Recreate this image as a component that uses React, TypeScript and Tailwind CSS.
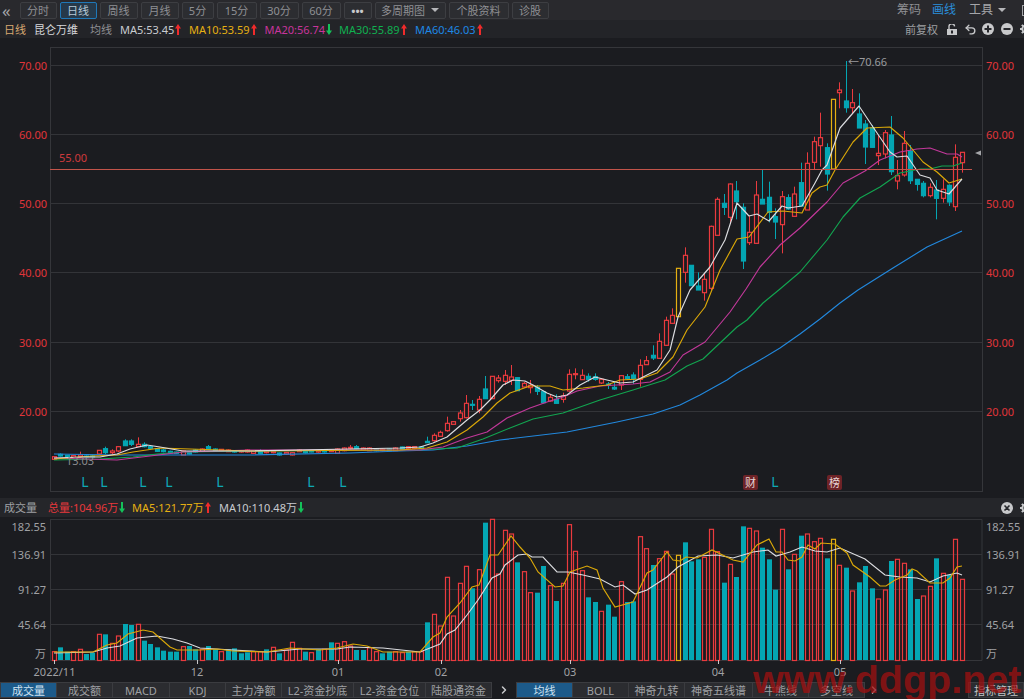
import { ChevronRight, Undo2 } from 'lucide-react';

type Kind = 'r' | 't' | 'y';
type Candle = [number, number, number, number, Kind];
type Point = [number, number];

const RED = '#ea3a3e';
const TEAL = '#04a6b3';
const YELLOW = '#e6b012';
const STEP = 6.44;
const barX = (i: number) => Math.floor(54.3 + STEP * i);

// candle rows were read off zoomed crops, so each group keeps its own y origin
const shift = (y0: number, rows: Candle[]): Candle[] =>
  rows.map(([h, t, b, l, k]) => [y0 + h / 3, y0 + t / 3, y0 + b / 3, y0 + l / 3, k]);

const candles: Candle[] = [
  ...shift(430, [
    [80, 80, 88, 88, 'r'], [70, 73, 78, 80, 't'], [75, 76, 80, 84, 't'], [75, 77, 82, 84, 'r'],
    [65, 75, 80, 82, 'r'], [76, 78, 80, 82, 't'], [76, 78, 81, 84, 't'], [60, 61, 72, 75, 'r'],
    [50, 56, 68, 72, 't'], [58, 63, 68, 72, 'r'], [48, 50, 63, 66, 'r'], [28, 33, 47, 48, 't'],
    [28, 33, 43, 48, 't'], [22, 43, 50, 50, 'r'], [37, 43, 50, 52, 't'], [47, 50, 55, 58, 't'],
    [55, 56, 64, 66, 't'], [57, 60, 65, 67, 't'], [62, 64, 69, 70, 't'], [65, 66, 70, 72, 't'],
    [62, 63, 75, 75, 'r'], [65, 66, 72, 73, 't'], [57, 60, 66, 68, 't'], [55, 57, 64, 66, 'r'],
    [45, 50, 58, 60, 't'], [55, 57, 63, 64, 't'], [57, 58, 63, 65, 'r'], [58, 60, 65, 66, 'r'],
    [60, 62, 66, 68, 't'], [60, 62, 66, 68, 'r'], [58, 60, 66, 68, 'r'], [60, 62, 70, 71, 'r'],
    [58, 63, 70, 71, 't'], [60, 63, 68, 70, 'r'], [62, 64, 68, 70, 'r'], [68, 69, 75, 77, 't'],
    [66, 67, 72, 74, 'r'], [66, 68, 75, 76, 'r'], [57, 60, 65, 66, 'r'], [60, 62, 68, 70, 't'],
    [60, 62, 66, 67, 't'], [60, 62, 66, 68, 'r'], [58, 60, 66, 68, 't'], [57, 60, 65, 66, 'r'],
    [55, 57, 70, 72, 'r'], [52, 54, 62, 64, 'r'], [45, 52, 54, 58, 'r'], [45, 50, 56, 58, 't'],
    [52, 54, 60, 62, 'r'], [52, 54, 62, 62, 'r'], [54, 56, 62, 64, 't'], [56, 58, 62, 64, 'r'],
    [55, 57, 62, 64, 't'], [52, 54, 62, 62, 'r'], [50, 51, 60, 62, 't'], [49, 50, 55, 58, 'r'],
    [49, 50, 55, 58, 'r'], [48, 50, 55, 58, 't'],
  ]),
  ...shift(260, [
    [530, 544, 548, 548, 't'], [520, 526, 542, 545, 'r'], [512, 517, 529, 531, 'r'], [470, 490, 512, 515, 'r'],
    [483, 485, 493, 493, 'r'], [450, 459, 476, 485, 'r'], [405, 430, 473, 475, 'r'], [420, 433, 435, 450, 't'],
    [408, 418, 450, 460, 'r'], [348, 387, 416, 416, 't'], [348, 349, 416, 416, 'r'], [345, 354, 362, 368, 'r'],
    [330, 346, 364, 375, 'r'], [315, 351, 361, 375, 'r'], [352, 353, 392, 392, 't'], [365, 370, 381, 383, 'r'],
    [360, 376, 383, 400, 'r'], [375, 382, 394, 405, 't'], [392, 395, 428, 430, 't'], [405, 412, 423, 425, 'r'],
    [403, 418, 430, 430, 't'], [398, 408, 418, 428, 'r'], [328, 343, 393, 395, 'r'], [325, 341, 343, 358, 'r'],
    [328, 346, 359, 360, 'r'], [340, 349, 358, 365, 't'], [340, 350, 358, 362, 't'], [355, 358, 369, 372, 'r'],
    [366, 372, 373, 387, 't'], [365, 382, 387, 390, 't'], [345, 347, 375, 390, 'r'], [342, 350, 356, 360, 't'],
    [337, 345, 356, 372, 't'], [298, 316, 358, 380, 'r'], [288, 302, 314, 314, 'r'], [256, 286, 294, 300, 't'],
    [220, 244, 295, 296, 'r'], [170, 181, 256, 258, 'r'], [145, 166, 190, 190, 'r'],
  ]),
  ...shift(180, [
    [265, 265, 410, 410, 'y'], [202, 226, 277, 308, 'r'], [256, 256, 317, 317, 't'], [277, 318, 330, 330, 't'],
    [280, 298, 338, 362, 'r'], [137, 139, 325, 330, 'r'], [52, 58, 166, 166, 'r'], [42, 70, 82, 105, 't'],
    [10, 12, 112, 132, 'r'], [3, 33, 65, 118, 't'], [70, 82, 243, 267, 't'], [107, 157, 188, 195, 'r'],
    [3, 45, 190, 190, 'r'],
  ]),
  ...shift(50, [
    [360, 448, 462, 462, 't'], [395, 442, 487, 517, 't'], [475, 500, 516, 567, 't'], [423, 440, 524, 610, 'r'],
    [433, 443, 477, 480, 't'], [410, 432, 499, 499, 'r'], [338, 398, 468, 468, 't'], [307, 340, 480, 480, 'r'],
    [260, 275, 337, 357, 'r'], [188, 263, 287, 350, 'r'], [280, 293, 372, 422, 't'], [148, 148, 357, 357, 'y'],
    [97, 120, 128, 175, 'r'], [33, 153, 173, 188, 't'], [117, 158, 173, 190, 'r'], [130, 192, 234, 234, 't'],
    [210, 222, 291, 342, 't'], [225, 233, 292, 292, 't'], [255, 310, 317, 345, 'r'], [240, 248, 312, 325, 'r'],
    [198, 255, 365, 375, 't'], [330, 377, 393, 418, 'r'], [243, 280, 375, 380, 'r'], [285, 303, 392, 402, 't'],
    [388, 388, 403, 422, 't'], [393, 400, 437, 442, 't'], [400, 412, 437, 442, 'r'], [390, 420, 445, 508, 't'],
    [388, 418, 445, 458, 'r'], [403, 406, 456, 468, 't'], [283, 322, 470, 483, 'r'], [307, 307, 338, 368, 'r'],
  ]),
];

const volTops = (y0: number, tops: number[], kinds: string) =>
  tops.map((t, i) => ({ top: y0 + t / 3, kind: kinds[i] as Kind }));

const volumes = [
  ...volTops(
    600,
    [155, 142, 155, 155, 148, 162, 158, 103, 103, 130, 108, 72, 75, 73, 122, 132, 142, 152, 155, 155, 140, 138, 148, 148, 138, 148, 155, 148, 145, 160, 157, 155, 155, 148, 142, 160, 150, 127, 145, 155, 158, 148, 148, 127, 130, 125, 138, 150, 150, 143, 155, 160, 155, 155, 158, 155, 155, 155, 67, 43, 78],
    'rttrrttrtrrttrttttttrttrttrttttrrtrtrrrtrtrtrrrttrrttrrtrrtrr'.slice(0, 61),
  ),
  ...volTops(
    500,
    [232, 348, 250, 199, 265, 209, 68, 58, 222, 91, 102, 187, 215, 278, 278, 198, 257, 303, 250, 74, 154, 212, 292, 306, 334, 314, 350, 245, 306, 304, 110, 146, 195, 176, 154, 222, 166, 127, 184, 178, 172, 88, 155, 248, 193, 231, 79, 85, 93, 143, 178, 269],
    'rrrrtrtrrrrtrrttrtrrrrttrttrttrrtrrrytttrrrtrttrrttt',
  ),
  ...volTops(
    500,
    [88, 208, 163, 107, 102, 125, 115, 175, 118, 196, 203, 273, 247, 198, 265, 297, 270, 183, 178, 190, 208, 297, 288, 259, 175, 220, 225, 118, 238],
    'rtrtrrrtyrtrtttrrtrrttrrtrtrr',
  ),
];

const lines: { color: string; pts: Point[] }[] = [
  {
    color: '#2288dd',
    pts: [[54, 454], [120, 455], [250, 455], [350, 453], [400, 451], [433, 450], [467, 446], [500, 440], [567, 432], [617, 422], [653, 414], [680, 405], [700, 395], [727, 380], [737, 373], [760, 360], [780, 348], [800, 334], [820, 319], [840, 303], [858, 290], [893, 268], [927, 247], [962, 231]],
  },
  {
    color: '#12a550',
    pts: [[54, 460], [100, 459], [133, 457], [157, 454], [183, 452], [250, 451], [417, 450], [457, 448], [483, 439], [510, 428], [533, 419], [563, 413], [600, 400], [633, 390], [665, 380], [687, 366], [703, 359], [720, 343], [737, 327], [747, 320], [763, 303], [780, 289], [800, 272], [827, 240], [843, 217], [860, 198], [880, 187], [900, 173], [920, 169], [930, 169], [942, 166], [953, 166], [962, 163]],
  },
  {
    color: '#c2389a',
    pts: [[54, 458], [117, 460], [150, 456], [183, 452], [250, 450], [420, 450], [443, 447], [467, 438], [487, 432], [507, 418], [530, 408], [547, 402], [563, 397], [577, 391], [600, 386], [633, 384], [650, 382], [670, 372], [683, 355], [705, 342], [730, 312], [746, 289], [760, 267], [780, 245], [800, 228], [827, 202], [843, 183], [865, 171], [880, 160], [900, 152], [917, 149], [930, 148], [947, 154], [957, 154], [962, 157]],
  },
  {
    color: '#dba808',
    pts: [[54, 459], [93, 456], [117, 455], [133, 452], [160, 448], [190, 449], [250, 451], [400, 450], [427, 448], [447, 442], [467, 430], [483, 417], [497, 403], [510, 393], [530, 386], [550, 386], [563, 390], [583, 388], [607, 385], [620, 380], [640, 379], [657, 373], [673, 357], [687, 330], [705, 307], [720, 270], [737, 239], [749, 237], [768, 212], [783, 211], [802, 213], [812, 193], [820, 187], [827, 185], [835, 170], [853, 142], [867, 128], [890, 127], [903, 138], [923, 162], [937, 172], [949, 183], [962, 179]],
  },
  {
    color: '#dcdde0',
    pts: [[54, 458], [83, 457], [100, 457], [117, 454], [130, 449], [147, 445], [160, 447], [183, 451], [250, 451], [350, 449], [400, 448], [420, 447], [433, 443], [447, 437], [467, 420], [480, 410], [490, 400], [503, 385], [513, 380], [525, 381], [533, 385], [547, 393], [557, 397], [567, 395], [580, 385], [595, 377], [607, 380], [620, 383], [633, 382], [643, 377], [657, 370], [670, 350], [678, 317], [690, 290], [710, 267], [725, 240], [737, 203], [749, 216], [757, 214], [769, 221], [782, 206], [788, 208], [802, 206], [815, 183], [822, 170], [827, 165], [840, 128], [859, 106], [873, 127], [890, 152], [897, 157], [907, 156], [920, 175], [930, 178], [937, 190], [949, 194], [962, 179]],
  },
];

const volMa5: Point[] = [[54, 652], [93, 652], [107, 645], [117, 643], [128, 634], [143, 630], [153, 632], [170, 647], [177, 650], [200, 650], [217, 649], [233, 651], [267, 652], [290, 648], [320, 650], [337, 648], [353, 644], [367, 646], [383, 652], [420, 652], [433, 637], [440, 633], [447, 617], [460, 603], [472, 587], [479, 585], [490, 555], [498, 555], [511, 536], [520, 547], [530, 558], [538, 572], [555, 587], [563, 586], [570, 572], [587, 566], [597, 570], [603, 588], [615, 607], [633, 602], [647, 573], [653, 570], [667, 552], [673, 560], [680, 561], [686, 557], [697, 558], [712, 550], [733, 560], [743, 562], [757, 545], [769, 539], [776, 552], [782, 552], [788, 560], [795, 561], [802, 557], [808, 545], [815, 549], [821, 543], [835, 544], [847, 553], [853, 565], [870, 577], [880, 586], [886, 586], [895, 580], [907, 575], [912, 569], [917, 571], [930, 583], [943, 583], [950, 578], [957, 567], [962, 566]];

const volMa10: Point[] = [[54, 653], [93, 652], [107, 648], [120, 646], [137, 638], [157, 636], [173, 639], [187, 643], [200, 648], [233, 650], [267, 652], [300, 649], [337, 649], [350, 647], [383, 648], [420, 652], [440, 644], [447, 634], [455, 630], [467, 615], [478, 600], [492, 578], [500, 574], [505, 565], [518, 555], [527, 554], [532, 557], [543, 557], [557, 572], [568, 572], [583, 575], [600, 579], [615, 587], [623, 585], [635, 594], [647, 590], [667, 577], [678, 567], [698, 556], [717, 555], [733, 558], [753, 552], [768, 550], [776, 556], [790, 552], [802, 547], [815, 551], [827, 552], [840, 548], [865, 559], [885, 575], [900, 577], [917, 578], [930, 582], [943, 576], [957, 573], [962, 575]];

const toPath = (pts: Point[]) => pts.map(([x, y]) => `${x},${y}`).join(' ');

const priceGrid = [
  { y: 65.5, label: '70.00' },
  { y: 134.5, label: '60.00' },
  { y: 203.5, label: '50.00' },
  { y: 272.5, label: '40.00' },
  { y: 342.5, label: '30.00' },
  { y: 411.5, label: '20.00' },
];
const volGrid = [
  { y: 519.5, label: '182.55' },
  { y: 554.5, label: '136.91' },
  { y: 589.5, label: '91.27' },
  { y: 624.5, label: '45.64' },
];
const signals = [85, 104, 143, 169, 220, 311, 343, 775];
const months = [
  { x: 197, label: '12' },
  { x: 338, label: '01' },
  { x: 441, label: '02' },
  { x: 570, label: '03' },
  { x: 718, label: '04' },
  { x: 840, label: '05' },
];

const periods = [
  { label: '分时', w: 'w-[37px]' },
  { label: '日线', w: 'w-[37px]', on: true },
  { label: '周线', w: 'w-[38px]' },
  { label: '月线', w: 'w-[38px]' },
  { label: '5分', w: 'w-[32px]' },
  { label: '15分', w: 'w-[40px]' },
  { label: '30分', w: 'w-[39px]' },
  { label: '60分', w: 'w-[39px]' },
];

const leftTabs = [
  { label: '成交量', w: 'w-[56px]', on: true },
  { label: '成交额', w: 'w-[56px]' },
  { label: 'MACD', w: 'w-[57px]' },
  { label: 'KDJ', w: 'w-[56px]' },
  { label: '主力净额', w: 'w-[56px]' },
  { label: 'L2-资金抄底', w: 'w-[72px]' },
  { label: 'L2-资金仓位', w: 'w-[72px]' },
  { label: '陆股通资金', w: 'w-[66px]' },
];
const rightTabs = [
  { label: '均线', w: 'w-[56px]', on: true },
  { label: 'BOLL', w: 'w-[56px]' },
  { label: '神奇九转', w: 'w-[56px]' },
  { label: '神奇五线谱', w: 'w-[68px]' },
  { label: '牛熊线', w: 'w-[56px]' },
  { label: '多空线', w: 'w-[56px]' },
];

function Arrow({ up }: { up?: boolean }) {
  const color = up ? '#f02b2b' : '#14c25a';
  return (
    <svg width="6" height="11" viewBox="0 0 6 11" className="shrink-0">
      {up ? (
        <path d="M3 0 L6 4.5 H4 V11 H2 V4.5 H0 Z" fill={color} />
      ) : (
        <path d="M3 11 L6 6.5 H4 V0 H2 V6.5 H0 Z" fill={color} />
      )}
    </svg>
  );
}

function RoundIcon({ kind }: { kind: 'plus' | 'minus' | 'close' }) {
  return (
    <svg width="12" height="12" viewBox="0 0 12 12" className="shrink-0">
      <circle cx="6" cy="6" r="6" fill="#c8c9cb" />
      {kind !== 'close' && <rect x="2.5" y="5" width="7" height="2" fill="#26272b" />}
      {kind === 'plus' && <rect x="5" y="2.5" width="2" height="7" fill="#26272b" />}
      {kind === 'close' && <path d="M3.5 3.5 L8.5 8.5 M8.5 3.5 L3.5 8.5" stroke="#26272b" strokeWidth="1.6" />}
    </svg>
  );
}

function Gear() {
  return (
    <svg width="12" height="12" viewBox="0 0 12 12" className="shrink-0">
      <circle cx="6" cy="6" r="3.6" fill="none" stroke="#c8c9cb" strokeWidth="2" />
      <path d="M6 0 V2.5 M6 9.5 V12 M0 6 H2.5 M9.5 6 H12 M1.8 1.8 L3.4 3.4 M8.6 8.6 L10.2 10.2 M10.2 1.8 L8.6 3.4 M3.4 8.6 L1.8 10.2" stroke="#c8c9cb" strokeWidth="1.8" />
    </svg>
  );
}

function Lock() {
  return (
    <svg width="10" height="11" viewBox="0 0 10 11" className="shrink-0">
      <path d="M2 5 V3 A2.8 2.8 0 0 1 7.6 2.4" fill="none" stroke="#c8c9cb" strokeWidth="1.4" />
      <rect x="0" y="5" width="10" height="6" fill="#c8c9cb" />
      <rect x="4" y="6.5" width="2" height="3" fill="#26272b" />
    </svg>
  );
}

function Tabs({ items }: { items: { label: string; w: string; on?: boolean }[] }) {
  return (
    <div className="flex h-[16px] border-y border-l border-[#3b3c40]">
      {items.map((t) => (
        <div
          key={t.label}
          className={`${t.w} flex items-center justify-center border-r border-[#3b3c40] leading-none ${
            t.on ? 'bg-[#1c5a8a] text-[#cfe2f1]' : 'bg-[#2b2c30] text-[#9fa0a3]'
          }`}
        >
          {t.label}
        </div>
      ))}
    </div>
  );
}

export default function App() {
  return (
    <div className="relative flex h-[699px] w-[1024px] flex-col overflow-hidden bg-[#1b1c20] font-['Noto_Sans','Noto_Sans_CJK_SC',sans-serif] text-[11px] text-[#9fa0a3]">
      <div className="flex h-[20px] items-center bg-[#29292d]">
        <span className="ml-[2px] w-[17.5px] text-[17px] leading-none text-[#a5a6a9]">«</span>
        <div className="flex gap-[3px]">
          {periods.map((p) => (
            <div
              key={p.label}
              className={`${p.w} flex h-[17px] items-center justify-center rounded-[2px] border leading-none ${
                p.on ? 'border-[#1f78b8] bg-[#26394a] text-[#b7cad8]' : 'border-[#3d3e42] bg-[#2c2d31] text-[#8f9094]'
              }`}
            >
              {p.label}
            </div>
          ))}
          <div className="flex h-[17px] w-[28px] items-center justify-center rounded-[2px] border border-[#3d3e42] bg-[#2c2d31] font-bold leading-none text-[#c8c9cb]">
            •••
          </div>
          <div className="flex h-[17px] w-[71px] items-center justify-center gap-[6px] rounded-[2px] border border-[#3d3e42] bg-[#2c2d31] leading-none text-[#8f9094]">
            多周期图
            <span className="h-0 w-0 border-x-[4px] border-t-[4px] border-x-transparent border-t-[#b5b6b9]" />
          </div>
          <div className="flex h-[17px] w-[60px] items-center justify-center rounded-[2px] border border-[#3d3e42] bg-[#2c2d31] leading-none text-[#8f9094]">
            个股资料
          </div>
          <div className="flex h-[17px] w-[37px] items-center justify-center rounded-[2px] border border-[#3d3e42] bg-[#2c2d31] leading-none text-[#8f9094]">
            诊股
          </div>
        </div>
        <div className="ml-auto mr-[-10px] flex items-center text-[12px]">
          <span className="text-[#8f9094]">筹码</span>
          <span className="ml-[11px] text-[#2a8fdc]">画线</span>
          <span className="ml-[13px] text-[#a5a6a9]">工具</span>
          <span className="ml-[5px] h-0 w-0 border-x-[4px] border-t-[4px] border-x-transparent border-t-[#b5b6b9]" />
          <span className="ml-[16px] h-[11px] w-[12px] border border-[#a5a6a9]" />
        </div>
      </div>

      <div className="flex h-[18px] items-center bg-[#232428] leading-none">
        <span className="ml-[4px] w-[30px] text-[#d8a972]">日线</span>
        <span className="w-[56px] text-[#d8d9db]">昆仑万维</span>
        <span className="w-[30px] text-[#8f9094]">均线</span>
        <span className="flex w-[69px] items-center gap-[1px] text-[#c9cbd0]">MA5:53.45<Arrow up /></span>
        <span className="flex w-[75.5px] items-center gap-[1px] text-[#e6b012]">MA10:53.59<Arrow up /></span>
        <span className="flex w-[74.5px] items-center gap-[1px] text-[#c8359c]">MA20:56.74<Arrow /></span>
        <span className="flex w-[76px] items-center gap-[1px] text-[#10b050]">MA30:55.89<Arrow up /></span>
        <span className="flex items-center gap-[1px] text-[#1e88e5]">MA60:46.03<Arrow up /></span>
        <div className="ml-auto mr-[-8px] flex items-center">
          <span className="text-[#9fa0a3]">前复权</span>
          <span className="ml-[9px]"><Lock /></span>
          <Undo2 size={13} strokeWidth={2.5} className="ml-[7px] text-[#c8c9cb]" />
          <span className="ml-[5px]"><RoundIcon kind="plus" /></span>
          <span className="ml-[7px]"><RoundIcon kind="minus" /></span>
          <span className="ml-[7px]"><Gear /></span>
        </div>
      </div>

      <svg width="1024" height="460" viewBox="0 38 1024 460" className="shrink-0">
        <rect x="50.5" y="47.5" width="932" height="444" fill="none" stroke="#35363a" />
        {priceGrid.map((g) => (
          <g key={g.y}>
            <line x1="50" x2="982" y1={g.y} y2={g.y} stroke="#333438" />
            <text x="47" y={g.y + 4} textAnchor="end" fontSize="11" fill="#e0353a">{g.label}</text>
            <text x="986" y={g.y + 4} fontSize="11" fill="#e0353a">{g.label}</text>
          </g>
        ))}
        {candles.map(([hi, top, bot, lo, kind], i) => {
          const n = barX(i);
          const color = kind === 't' ? TEAL : kind === 'y' ? YELLOW : RED;
          return (
            <g key={i}>
              <line x1={n + 0.5} x2={n + 0.5} y1={hi} y2={lo} stroke={color} />
              <rect
                x={n - 1.5}
                y={top}
                width="4"
                height={Math.max(bot - top, 1)}
                fill={kind === 't' ? TEAL : '#1b1c20'}
                stroke={color}
                strokeWidth="1.2"
              />
            </g>
          );
        })}
        {lines.map((l) => (
          <polyline key={l.color} points={toPath(l.pts)} fill="none" stroke={l.color} strokeWidth="1.15" strokeLinejoin="round" />
        ))}
        <line x1="50" x2="972" y1="169.5" y2="169.5" stroke="#c2544a" />
        <text x="59" y="162" fontSize="11" fill="#cf3a3c">55.00</text>
        <path d="M975 153 L981 150.5 V155.5 Z" fill="#a5a6a9" />
        <text x="848" y="66" fontSize="11" fill="#9a9b9e">←70.66</text>
        <text x="66" y="465" fontSize="11" fill="#8a8b8e">13.03</text>
        {signals.map((x) => (
          <text key={x} x={x} y="487" textAnchor="middle" fontSize="14" fill="#0fa8b5">L</text>
        ))}
        <rect x="743" y="475" width="15" height="15" rx="2" fill="#6e2327" />
        <text x="750.5" y="487" textAnchor="middle" fontSize="11" fill="#e6d5d5">财</text>
        <rect x="827" y="475" width="15" height="15" rx="2" fill="#6e2327" />
        <text x="834.5" y="487" textAnchor="middle" fontSize="11" fill="#e6d5d5">榜</text>
      </svg>

      <div className="flex h-[19px] items-center bg-[#25262a] leading-none">
        <span className="ml-[4px] w-[44px] text-[#9fa0a3]">成交量</span>
        <span className="flex w-[84px] items-center gap-[1px] text-[#e8383c]">总量:104.96万<Arrow /></span>
        <span className="flex w-[87px] items-center gap-[1px] text-[#e6b012]">MA5:121.77万<Arrow up /></span>
        <span className="flex items-center gap-[1px] text-[#c9cbd0]">MA10:110.48万<Arrow /></span>
        <div className="ml-auto mr-[-8px] flex items-center">
          <RoundIcon kind="close" />
          <span className="ml-[7px]"><Gear /></span>
        </div>
      </div>

      <svg width="1024" height="165" viewBox="0 517 1024 165" className="shrink-0">
        <path d="M50.5 519.5 H982 V660.5 H50.5 Z" fill="none" stroke="#35363a" />
        {volGrid.map((g) => (
          <g key={g.y}>
            <line x1="50" x2="982" y1={g.y} y2={g.y} stroke="#333438" />
            <text x="46" y={g.y + (g.y < 520 ? 11.5 : 4)} textAnchor="end" fontSize="11" fill="#a0a1a4">{g.label}</text>
            <text x="986" y={g.y + (g.y < 520 ? 11.5 : 4)} fontSize="11" fill="#a0a1a4">{g.label}</text>
          </g>
        ))}
        <text x="46" y="658" textAnchor="end" fontSize="11" fill="#a0a1a4">万</text>
        <text x="986" y="658" fontSize="11" fill="#a0a1a4">万</text>
        {volumes.map((v, i) => {
          const n = barX(i);
          if (v.kind === 't') {
            return <rect key={i} x={n - 2} y={v.top} width="5" height={660 - v.top} fill={TEAL} />;
          }
          return (
            <rect
              key={i}
              x={n - 1.5}
              y={v.top}
              width="4"
              height={660.5 - v.top}
              fill="none"
              stroke={v.kind === 'y' ? YELLOW : RED}
              strokeWidth="1.2"
            />
          );
        })}
        <polyline points={toPath(volMa10)} fill="none" stroke="#dcdde0" strokeWidth="1.15" />
        <polyline points={toPath(volMa5)} fill="none" stroke="#dba808" strokeWidth="1.15" />
        <line x1="54.5" x2="54.5" y1="660" y2="664" stroke="#c8c9cb" />
        <text x="54.5" y="676" textAnchor="middle" fontSize="11" fill="#a0a1a4">2022/11</text>
        {months.map((m) => (
          <g key={m.x}>
            <line x1={m.x + 0.5} x2={m.x + 0.5} y1="660" y2="664" stroke="#c8c9cb" />
            <text x={m.x} y="676" textAnchor="middle" fontSize="11" fill="#a0a1a4">{m.label}</text>
          </g>
        ))}
      </svg>

      <div className="flex h-[17px] items-start">
        <Tabs items={leftTabs} />
        <ChevronRight size={12} strokeWidth={3} className="ml-[6px] mt-[2px] text-[#c8c9cb]" />
        <div className="ml-[6px]">
          <Tabs items={rightTabs} />
        </div>
        <ChevronRight size={12} strokeWidth={3} className="ml-[3px] mt-[2px] text-[#c8c9cb]" />
        <div className="ml-auto flex h-[16px] w-[56px] items-center justify-center border border-[#3b3c40] bg-[#2b2c30] leading-none text-[#c0c1c4]">
          指标管理
        </div>
      </div>

      <div className="absolute left-[753px] top-[655px] whitespace-nowrap font-['Liberation_Sans',sans-serif] text-[39.5px] font-bold leading-[48px] text-[#a01010]/75">
        www.ddgp.net
      </div>
    </div>
  );
}
